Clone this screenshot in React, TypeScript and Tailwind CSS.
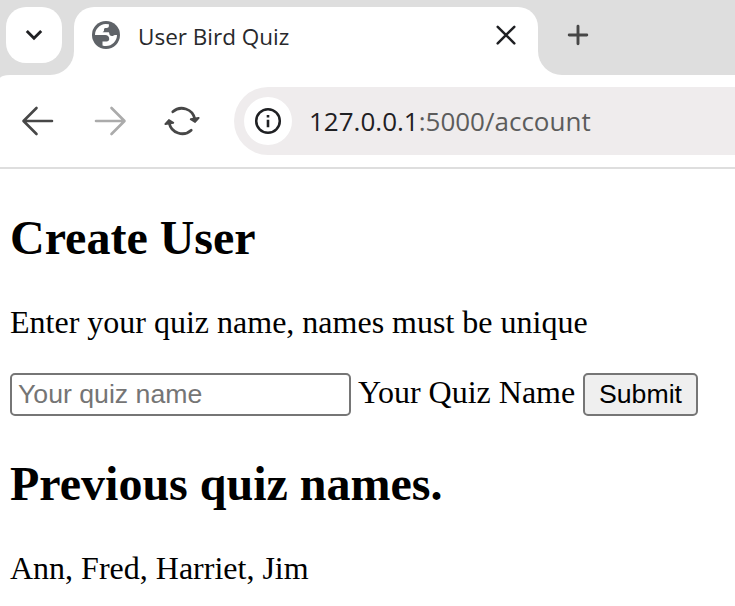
export default function App() {
  return (
    <div className="h-[606px] w-[735px] overflow-hidden bg-white text-black">
      <header>
        <div className="flex h-[75px] bg-white">
          <div className="w-[74px] rounded-br-[24px] bg-[#dedede] pt-[7px] pl-[6px]">
            <button className="flex size-14 items-center justify-center rounded-[20px] bg-white">
              <svg width="56" height="56" viewBox="6 7 56 56" fill="none">
                <path d="M26.800 31l7.200 7.200L41.200 31" stroke="#1f2023" strokeWidth="2.900" />
              </svg>
            </button>
          </div>
          <div className="w-[464px] bg-[#dedede] pt-[7px]">
            <div className="flex h-[68px] rounded-t-[20px] bg-white pl-[18px]">
              <svg width="28" height="28" viewBox="0 0 28 28" className="mt-[14px] shrink-0">
                <circle cx="14" cy="14" r="14" fill="#5f6368" />
                <path
                  d="M13.600 3L16.900 3.200V4.800C16.900 6.200 16 7 14.600 7H13.600C12.600 7 12 7.600 12 8.600V9.300C12 10.300 11.500 10.700 10.700 10.900V11.200H16.300C17.100 11.200 17.300 11.800 17.300 12.600C17.300 14.200 18.300 15.100 19.800 15.100C21.600 15.100 21.800 14 22.800 14H25C25 20 20.200 25 14 25C12.800 25 11.600 24.800 10.500 24.400V20.500H14.600C16.200 20.500 17.200 19.500 17.200 18C17.200 15.600 15.600 14 13.200 14H3C3 8.200 7.800 3.200 13.600 3Z"
                  fill="#fff"
                />
              </svg>
              <span className="mt-[14px] ml-[18px] w-[340px] shrink-0 font-['Open_Sans',sans-serif] text-[22.500px] leading-[31px] whitespace-nowrap text-[#28292c]">
                User Bird Quiz
              </span>
              <svg width="56" height="56" viewBox="478 7 56 56" fill="none" className="shrink-0">
                <path d="M497.700 26.800l16.600 16.600M514.300 26.800l-16.600 16.600" stroke="#1f2023" strokeWidth="2.500" strokeLinecap="round" />
              </svg>
            </div>
          </div>
          <div className="flex-1 rounded-bl-[24px] bg-[#dedede] pt-[15px] pl-5">
            <svg width="40" height="40" viewBox="558 15 40 40" fill="none">
              <path d="M569.200 35h17.600M578 26.200v17.600" stroke="#474747" strokeWidth="2.900" strokeLinecap="round" />
            </svg>
          </div>
        </div>
        <div className="bg-[#dedede]">
          <div className="flex h-[94px] rounded-tl-[10px_3px] border-b-2 border-[#dedede] bg-white">
            <div className="w-[234px] shrink-0">
              <svg width="234" height="92" viewBox="0 75 234 92" fill="none" strokeLinecap="round" strokeLinejoin="round">
                <path d="M52 121H24M36.500 108L23.500 121l13 13" stroke="#474747" strokeWidth="2.600" />
                <path d="M96 121h28M111.500 108l13 13-13 13" stroke="#ababab" strokeWidth="2.600" />
                <g stroke="#474747" strokeWidth="2.800">
                  <path d="M172.800 111.800A13.300 13.300 0 0 1 194.800 119" />
                  <path d="M191.200 130.200A13.300 13.300 0 0 1 169.200 123" />
                </g>
                <path
                  d="M190.700 119.200l8-1.400-3.600 4.200zM173.300 122.800l-8 1.400 3.600-4.200z"
                  fill="#474747"
                  stroke="#474747"
                  strokeWidth="1.800"
                />
              </svg>
            </div>
            <div className="mt-3 flex h-[68px] flex-1 items-center rounded-l-full bg-[#efeced] pl-[10px]">
              <div className="flex size-12 items-center justify-center rounded-full bg-white">
                <svg width="28" height="28" viewBox="0 0 28 28" fill="none">
                  <circle cx="14" cy="14" r="11.800" stroke="#1f2023" strokeWidth="2.500" />
                  <path d="M14 12.700v7.500M14 8v2.500" stroke="#1f2023" strokeWidth="2.600" />
                </svg>
              </div>
              <span className="ml-[17px] font-['Open_Sans',sans-serif] text-[26px] whitespace-nowrap text-[#5c5c5c]">
                <span className="text-[#1f2023]">127.0.0.1</span>:5000/account
              </span>
            </div>
          </div>
        </div>
      </header>
      <main className="pl-[10px] font-['Liberation_Serif',serif] text-[32px] leading-[36px]">
        <h2 className="pt-[42px] text-[48px] leading-[54px] font-bold whitespace-nowrap">Create User</h2>
        <p className="mt-[39px] whitespace-nowrap">Enter your quiz name, names must be unique</p>
        <form className="mt-[33px] flex h-[43px] items-start whitespace-nowrap">
          <input
            placeholder="Your quiz name"
            className="h-[43px] w-[341px] rounded-[5px] border-2 border-[#767676] px-[6px] pb-px font-['Liberation_Sans',sans-serif] text-[26.670px] placeholder:text-[#757575]"
          />
          <label className="mt-px ml-[7px] w-[225px]">Your Quiz Name</label>
          <button
            type="button"
            className="h-[43px] w-[115px] rounded-[5px] border-2 border-[#767676] bg-[#efefef] pb-[2px] font-['Liberation_Sans',sans-serif] text-[26.670px] leading-[30px]"
          >
            Submit
          </button>
        </form>
        <h2 className="mt-[41px] text-[48px] leading-[54px] font-bold whitespace-nowrap">Previous quiz names.</h2>
        <p className="mt-[39px] whitespace-nowrap">Ann, Fred, Harriet, Jim</p>
      </main>
    </div>
  );
}
